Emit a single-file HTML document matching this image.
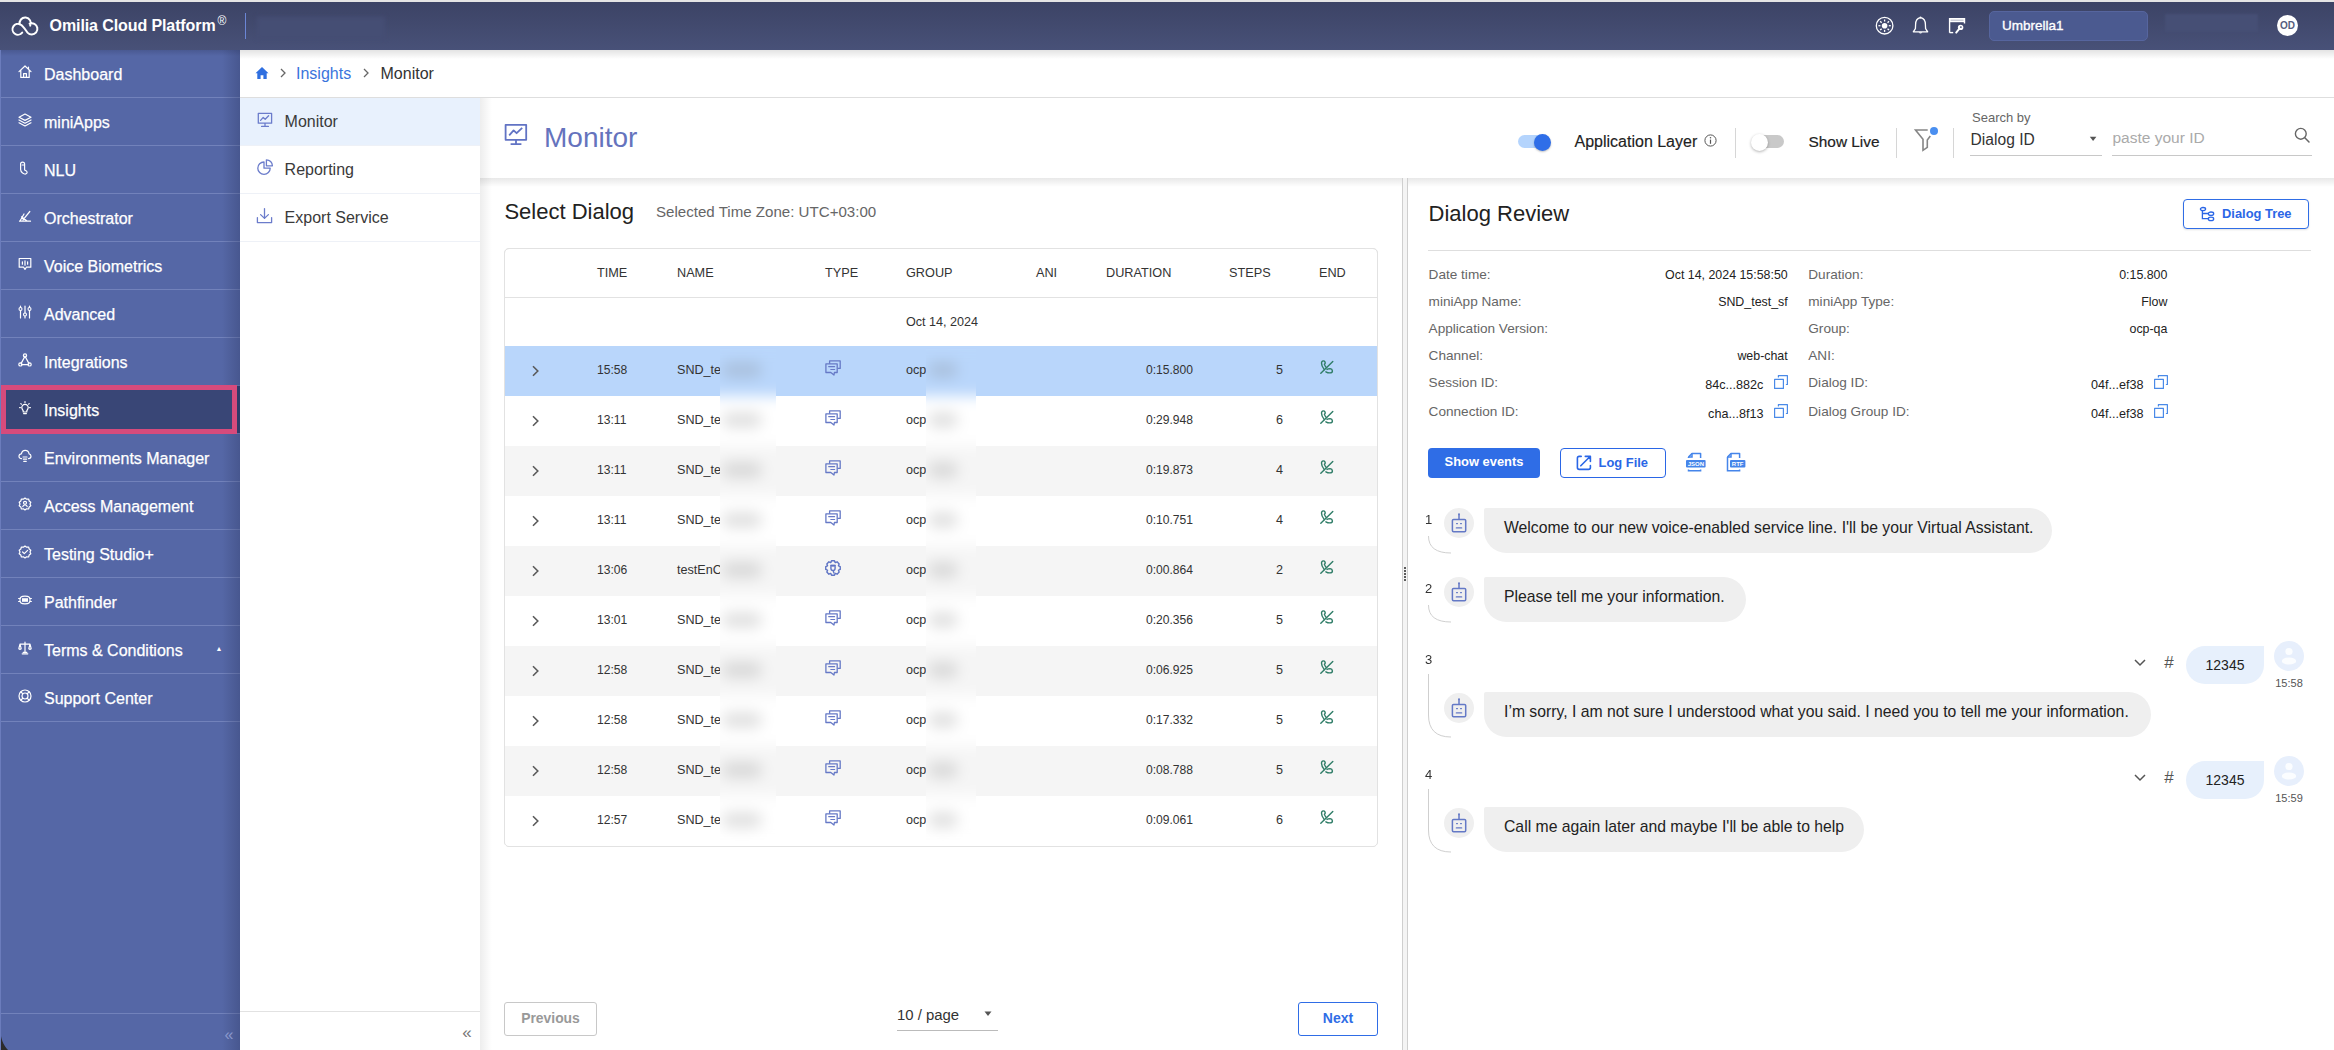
<!DOCTYPE html>
<html><head><meta charset="utf-8"><style>
*{margin:0;padding:0;box-sizing:border-box}
html,body{width:2334px;height:1050px;overflow:hidden;background:#fff;font-family:"Liberation Sans",sans-serif;color:#222}
.a{position:absolute}
.t{position:absolute;white-space:nowrap;line-height:20px;height:20px}
.sep{position:absolute;height:1px}
svg{position:absolute;overflow:visible}
</style></head><body>
<div class="a" style="left:0px;top:0px;width:2334px;height:2px;background:#e4e4e4"></div>
<div class="a" style="left:0px;top:2px;width:2334px;height:48px;background:linear-gradient(#3c4365,#485178)"></div>
<svg style="left:0px;top:0px;" width="50" height="50" viewBox="0 0 50 50"><path d="M22.2 32.6 A5.4 5.4 0 1 1 20.6 24.6 C23.6 26.2 25.8 30.5 27.5 32.6 C28.8 34 30.2 34.6 31.8 34.6 A5.7 5.7 0 1 0 29.6 23.6 M30.2 25.6 A5.6 5.6 0 1 0 19.8 24.6" fill="none" stroke="#fff" stroke-width="2" stroke-linecap="round" stroke-linejoin="round"/></svg>
<div class="t" style="left:49.6px;top:16.4px;font-size:16px;color:#fff;font-weight:bold;letter-spacing:-0.1px">Omilia Cloud Platform</div>
<div class="t" style="left:217.5px;top:11px;font-size:12px;color:#fff;font-weight:normal;">&reg;</div>
<div class="a" style="left:245px;top:13px;width:1px;height:26px;background:#6b86d6"></div>
<div class="a" style="left:257px;top:17px;width:128px;height:22px;background:#454e74;filter:blur(2px)"></div>
<svg style="left:1875px;top:16px;" width="20" height="20" viewBox="0 0 20 20"><circle cx="9.6" cy="9.7" r="8.3" fill="none" stroke="#fff" stroke-width="1.3"/><circle cx="9.6" cy="9.7" r="2.8" fill="#fff"/><line x1="9.60" y1="5.50" x2="9.60" y2="3.50" stroke="#fff" stroke-width="1.3"/><line x1="12.57" y1="6.73" x2="13.98" y2="5.32" stroke="#fff" stroke-width="1.3"/><line x1="13.80" y1="9.70" x2="15.80" y2="9.70" stroke="#fff" stroke-width="1.3"/><line x1="12.57" y1="12.67" x2="13.98" y2="14.08" stroke="#fff" stroke-width="1.3"/><line x1="9.60" y1="13.90" x2="9.60" y2="15.90" stroke="#fff" stroke-width="1.3"/><line x1="6.63" y1="12.67" x2="5.22" y2="14.08" stroke="#fff" stroke-width="1.3"/><line x1="5.40" y1="9.70" x2="3.40" y2="9.70" stroke="#fff" stroke-width="1.3"/><line x1="6.63" y1="6.73" x2="5.22" y2="5.32" stroke="#fff" stroke-width="1.3"/></svg>
<svg style="left:1912px;top:16px;" width="18" height="20" viewBox="0 0 18 20"><path d="M8.5 1.6 C5 2.2 3.6 5 3.6 8.5 L3.4 12.6 L1.3 15.8 L15.7 15.8 L13.6 12.6 L13.4 8.5 C13.4 5 12 2.2 8.5 1.6 Z" fill="none" stroke="#fff" stroke-width="1.3" stroke-linejoin="round"/><path d="M6.6 16.2 Q8.5 18.8 10.4 16.2 Z" fill="#fff"/><circle cx="8.5" cy="1.6" r="1" fill="#fff"/></svg>
<svg style="left:1948px;top:17px;" width="20" height="18" viewBox="0 0 20 18"><path d="M1.6 15.8 V1.6 H16.5 V6.4" fill="none" stroke="#fff" stroke-width="1.4"/><rect x="1.6" y="1.6" width="14.9" height="3.6" fill="#fff"/><rect x="2.6" y="2.6" width="12.9" height="1.2" fill="#4a5379" opacity=".35"/><line x1="1.6" y1="15.6" x2="5.2" y2="15.6" stroke="#fff" stroke-width="1.4"/><circle cx="12.6" cy="10.4" r="2.7" fill="#fff"/><circle cx="12.9" cy="10.1" r="0.9" fill="#454e74"/><line x1="11" y1="12.2" x2="8.2" y2="15.6" stroke="#fff" stroke-width="2" stroke-linecap="round"/></svg>
<div class="a" style="left:1989px;top:11px;width:159px;height:30px;background:#4b5a90;border:1px solid #56659e;border-radius:5px"></div>
<div class="t" style="left:2002px;top:16px;font-size:13.5px;color:#fff;font-weight:normal;-webkit-text-stroke:0.35px #fff">Umbrella1</div>
<div class="a" style="left:2165px;top:14px;width:93px;height:18px;background:#464f75;filter:blur(1px)"></div>
<div class="a" style="left:2277px;top:15px;width:21px;height:21px;background:#fff;border-radius:50%"></div>
<div class="t" style="left:2187.5px;width:200px;top:16px;font-size:10px;color:#555d80;font-weight:bold;text-align:center;">OD</div>
<div class="a" style="left:0px;top:50px;width:240px;height:1000px;background:#5567a6"></div>
<div class="a" style="left:0px;top:50px;width:240px;height:6px;background:linear-gradient(rgba(40,48,85,.25),rgba(40,48,85,0))"></div>
<div class="sep" style="left:0;top:97px;width:240px;background:#7282bb"></div>
<div class="sep" style="left:0;top:145px;width:240px;background:#7282bb"></div>
<div class="sep" style="left:0;top:193px;width:240px;background:#7282bb"></div>
<div class="sep" style="left:0;top:241px;width:240px;background:#7282bb"></div>
<div class="sep" style="left:0;top:289px;width:240px;background:#7282bb"></div>
<div class="sep" style="left:0;top:337px;width:240px;background:#7282bb"></div>
<div class="sep" style="left:0;top:385px;width:240px;background:#7282bb"></div>
<div class="sep" style="left:0;top:433px;width:240px;background:#7282bb"></div>
<div class="sep" style="left:0;top:481px;width:240px;background:#7282bb"></div>
<div class="sep" style="left:0;top:529px;width:240px;background:#7282bb"></div>
<div class="sep" style="left:0;top:577px;width:240px;background:#7282bb"></div>
<div class="sep" style="left:0;top:625px;width:240px;background:#7282bb"></div>
<div class="sep" style="left:0;top:673px;width:240px;background:#7282bb"></div>
<div class="sep" style="left:0;top:721px;width:240px;background:#7282bb"></div>
<div class="a" style="left:0px;top:1013px;width:240px;height:1px;background:#7282bb"></div>
<div class="a" style="left:222px;top:50px;width:18px;height:1000px;background:linear-gradient(90deg,rgba(40,50,90,0),rgba(40,50,90,.3))"></div>
<div class="a" style="left:0px;top:386px;width:240px;height:47px;background:#2f3b69"></div>
<div class="a" style="left:1px;top:385px;width:236px;height:49px;background:#394676;border:5px solid #d64b7c"></div>
<div class="t" style="left:44px;top:65px;font-size:16px;color:#fff;font-weight:normal;-webkit-text-stroke:0.25px #fff">Dashboard</div>
<div class="t" style="left:44px;top:113px;font-size:16px;color:#fff;font-weight:normal;-webkit-text-stroke:0.25px #fff">miniApps</div>
<div class="t" style="left:44px;top:161px;font-size:16px;color:#fff;font-weight:normal;-webkit-text-stroke:0.25px #fff">NLU</div>
<div class="t" style="left:44px;top:209px;font-size:16px;color:#fff;font-weight:normal;-webkit-text-stroke:0.25px #fff">Orchestrator</div>
<div class="t" style="left:44px;top:257px;font-size:16px;color:#fff;font-weight:normal;-webkit-text-stroke:0.25px #fff">Voice Biometrics</div>
<div class="t" style="left:44px;top:305px;font-size:16px;color:#fff;font-weight:normal;-webkit-text-stroke:0.25px #fff">Advanced</div>
<div class="t" style="left:44px;top:353px;font-size:16px;color:#fff;font-weight:normal;-webkit-text-stroke:0.25px #fff">Integrations</div>
<div class="t" style="left:44px;top:401px;font-size:16px;color:#fff;font-weight:normal;-webkit-text-stroke:0.25px #fff">Insights</div>
<div class="t" style="left:44px;top:449px;font-size:16px;color:#fff;font-weight:normal;-webkit-text-stroke:0.25px #fff">Environments Manager</div>
<div class="t" style="left:44px;top:497px;font-size:16px;color:#fff;font-weight:normal;-webkit-text-stroke:0.25px #fff">Access Management</div>
<div class="t" style="left:44px;top:545px;font-size:16px;color:#fff;font-weight:normal;-webkit-text-stroke:0.25px #fff">Testing Studio+</div>
<div class="t" style="left:44px;top:593px;font-size:16px;color:#fff;font-weight:normal;-webkit-text-stroke:0.25px #fff">Pathfinder</div>
<div class="t" style="left:44px;top:641px;font-size:16px;color:#fff;font-weight:normal;-webkit-text-stroke:0.25px #fff">Terms &amp; Conditions</div>
<div class="t" style="left:44px;top:689px;font-size:16px;color:#fff;font-weight:normal;-webkit-text-stroke:0.25px #fff">Support Center</div>
<div class="t" style="left:129px;width:200px;top:1025px;font-size:16px;color:#8a98cc;font-weight:normal;text-align:center;">&laquo;</div>
<div class="t" style="left:119px;width:200px;top:639px;font-size:7px;color:#fff;font-weight:normal;text-align:center;">&#9650;</div>
<div class="a" style="left:240px;top:50px;width:2094px;height:47px;background:#fff"></div>
<div class="a" style="left:240px;top:97px;width:2094px;height:1px;background:#dedede"></div>
<div class="a" style="left:240px;top:50px;width:2094px;height:9px;background:linear-gradient(rgba(0,0,0,.11),rgba(0,0,0,0))"></div>
<div class="t" style="left:296px;top:64.2px;font-size:16px;color:#3a74dc;font-weight:normal;">Insights</div>
<div class="t" style="left:380.5px;top:64px;font-size:16px;color:#333;font-weight:normal;">Monitor</div>
<svg style="left:255px;top:66px;" width="14" height="14" viewBox="0 0 14 14"><path d="M7 1 L0.5 7.2 L2.3 7.2 L2.3 13 L5.6 13 L5.6 9.2 L8.4 9.2 L8.4 13 L11.7 13 L11.7 7.2 L13.5 7.2 Z" fill="#2f6fe0"/></svg>
<svg style="left:279px;top:68px;" width="8" height="10" viewBox="0 0 8 10"><path d="M2 1 L6 5 L2 9" fill="none" stroke="#666" stroke-width="1.3"/></svg>
<svg style="left:362px;top:68px;" width="8" height="10" viewBox="0 0 8 10"><path d="M2 1 L6 5 L2 9" fill="none" stroke="#666" stroke-width="1.3"/></svg>
<div class="a" style="left:240px;top:98px;width:240px;height:47px;background:#e8f1fd"></div>
<div class="a" style="left:240px;top:145px;width:240px;height:1px;background:#eef1f7"></div>
<div class="a" style="left:240px;top:193px;width:240px;height:1px;background:#eef1f7"></div>
<div class="a" style="left:240px;top:241px;width:240px;height:1px;background:#eef1f7"></div>
<div class="a" style="left:240px;top:1011px;width:240px;height:1px;background:#e2e2e2"></div>
<div class="t" style="left:284.6px;top:112px;font-size:16px;color:#3a3a3a;font-weight:normal;">Monitor</div>
<div class="t" style="left:284.6px;top:160px;font-size:16px;color:#3a3a3a;font-weight:normal;">Reporting</div>
<div class="t" style="left:284.6px;top:208px;font-size:16px;color:#3a3a3a;font-weight:normal;">Export Service</div>
<div class="t" style="left:367px;width:200px;top:1023px;font-size:17px;color:#777;font-weight:normal;text-align:center;">&laquo;</div>
<div class="a" style="left:480px;top:98px;width:1854px;height:80px;background:#fff"></div>
<div class="a" style="left:480px;top:178px;width:1854px;height:9px;background:linear-gradient(rgba(0,0,0,.09),rgba(0,0,0,0))"></div>
<div class="t" style="left:544px;top:127.5px;font-size:28px;color:#6573bd;font-weight:normal;">Monitor</div>
<div class="a" style="left:1518px;top:135px;width:32px;height:13px;background:#b4d4fd;border-radius:7px"></div>
<div class="a" style="left:1534px;top:133.5px;width:17px;height:17px;background:#2f6ee8;border-radius:50%;box-shadow:0 1px 2px rgba(0,0,0,.25)"></div>
<div class="t" style="left:1574.5px;top:131.7px;font-size:16px;color:#222;font-weight:normal;-webkit-text-stroke:0.15px #222">Application Layer</div>
<svg style="left:1704px;top:134px;" width="13" height="13" viewBox="0 0 13 13"><circle cx="6.5" cy="6.5" r="5.6" fill="none" stroke="#555" stroke-width="1"/><path d="M6.5 5.6 V9.8" stroke="#555" stroke-width="1.2"/><circle cx="6.5" cy="3.7" r="0.75" fill="#555"/></svg>
<div class="a" style="left:1735px;top:128px;width:1px;height:30px;background:#d6d6d6"></div>
<div class="a" style="left:1753px;top:135px;width:31px;height:13px;background:#c9c9c9;border-radius:7px"></div>
<div class="a" style="left:1751px;top:133.5px;width:17px;height:17px;background:#fff;border-radius:50%;box-shadow:0 1px 3px rgba(0,0,0,.3)"></div>
<div class="t" style="left:1808.5px;top:131.7px;font-size:15.4px;color:#222;font-weight:normal;-webkit-text-stroke:0.2px #222">Show Live</div>
<div class="a" style="left:1896px;top:128px;width:1px;height:30px;background:#d6d6d6"></div>
<svg style="left:1913px;top:127px;" width="24" height="25" viewBox="0 0 24 25"><path d="M14.7 3 H2.5 L10 12.3 V23.3 L14.3 20.3 V13 L17.3 9" fill="none" stroke="#858585" stroke-width="1.6" stroke-linejoin="miter"/><circle cx="21" cy="4" r="4" fill="#4a8ff0"/></svg>
<div class="a" style="left:1953px;top:128px;width:1px;height:30px;background:#d6d6d6"></div>
<div class="t" style="left:1972px;top:107.5px;font-size:13px;color:#666;font-weight:normal;">Search by</div>
<div class="t" style="left:1970.6px;top:129.7px;font-size:15.6px;color:#333;font-weight:normal;">Dialog ID</div>
<svg style="left:2089px;top:136px;" width="9" height="7" viewBox="0 0 9 7"><path d="M0.8 0.8 L7.4 0.8 L4.1 5 Z" fill="#555"/></svg>
<div class="a" style="left:1970px;top:155px;width:132px;height:1px;background:#c8c8c8"></div>
<div class="t" style="left:2112.5px;top:128.1px;font-size:15.5px;color:#aaa;font-weight:normal;">paste your ID</div>
<div class="a" style="left:2112px;top:155px;width:200px;height:1px;background:#c8c8c8"></div>
<svg style="left:2294px;top:127px;" width="17" height="17" viewBox="0 0 17 17"><circle cx="6.8" cy="6.8" r="5.4" fill="none" stroke="#666" stroke-width="1.4"/><path d="M10.8 10.8 L15 15" stroke="#666" stroke-width="1.5" stroke-linecap="round"/></svg>
<div class="a" style="left:480px;top:98px;width:12px;height:952px;background:linear-gradient(90deg,rgba(0,0,0,.07),rgba(0,0,0,0))"></div>
<div class="t" style="left:504.4px;top:202.4px;font-size:22px;color:#222;font-weight:normal;">Select Dialog</div>
<div class="t" style="left:656px;top:202.1px;font-size:15.1px;color:#666;font-weight:normal;">Selected Time Zone: UTC+03:00</div>
<div class="a" style="left:504px;top:248px;width:874px;height:599px;background:#fff;border:1px solid #e2e2e2;border-radius:5px"></div>
<div class="a" style="left:505px;top:297px;width:872px;height:1px;background:#e2e2e2"></div>
<div class="t" style="left:597px;top:262.5px;font-size:12.7px;color:#333;font-weight:normal;">TIME</div>
<div class="t" style="left:677px;top:262.5px;font-size:12.7px;color:#333;font-weight:normal;">NAME</div>
<div class="t" style="left:825px;top:262.5px;font-size:12.7px;color:#333;font-weight:normal;">TYPE</div>
<div class="t" style="left:906px;top:262.5px;font-size:12.7px;color:#333;font-weight:normal;">GROUP</div>
<div class="t" style="left:1036px;top:262.5px;font-size:12.7px;color:#333;font-weight:normal;">ANI</div>
<div class="t" style="left:1106px;top:262.5px;font-size:12.7px;color:#333;font-weight:normal;">DURATION</div>
<div class="t" style="left:1229px;top:262.5px;font-size:12.7px;color:#333;font-weight:normal;">STEPS</div>
<div class="t" style="left:1319px;top:262.5px;font-size:12.7px;color:#333;font-weight:normal;">END</div>
<div class="t" style="left:906px;top:312px;font-size:12.6px;color:#333;font-weight:normal;">Oct 14, 2024</div>
<div class="a" style="left:505px;top:346px;width:872px;height:50px;background:#b9d6fb"></div>
<svg style="left:531px;top:365.4px;" width="10" height="12" viewBox="0 0 10 12"><path d="M2 1.2 L6.8 6 L2 10.8" fill="none" stroke="#5a5a5a" stroke-width="1.6"/></svg>
<div class="t" style="left:597px;top:360.4px;font-size:12.1px;color:#333;font-weight:normal;">15:58</div>
<div class="t" style="left:677px;top:360.4px;font-size:12.6px;color:#333;font-weight:normal;">SND_te</div>
<svg style="left:825px;top:360.4px;" width="16" height="16" viewBox="0 0 16 16"><path d="M4.6 3.8 V0.9 H15.2 V8.4 H12.6" fill="none" stroke="#6679c6" stroke-width="1.3" stroke-linejoin="round"/><path d="M0.9 3.9 H12.2 V12.5 H9.4 L9 15 L5.8 12.5 H0.9 Z" fill="none" stroke="#6679c6" stroke-width="1.3" stroke-linejoin="round"/><line x1="3.7" y1="6.6" x2="9.6" y2="6.6" stroke="#6679c6" stroke-width="1.2" stroke-linecap="round"/><line x1="5.8" y1="9.5" x2="9.6" y2="9.5" stroke="#6679c6" stroke-width="1.2" stroke-linecap="round"/></svg>
<div class="t" style="left:906px;top:360.4px;font-size:12.6px;color:#333;font-weight:normal;">ocp</div>
<div class="t" style="right:1141px;top:360.4px;font-size:12.1px;color:#333;font-weight:normal;text-align:right;">0:15.800</div>
<div class="t" style="right:1051px;top:360.4px;font-size:12.6px;color:#333;font-weight:normal;text-align:right;">5</div>
<svg style="left:1320px;top:360.4px;" width="14" height="14" viewBox="0 0 14 14"><line x1="0.8" y1="13.3" x2="12.8" y2="1.4" stroke="#2f7d67" stroke-width="1.4" stroke-linecap="round"/><path d="M4.3 9.6 C2.6 7.6 1.4 5.6 1.5 3 C1.6 1.3 3 0.4 4.3 1.2 C5.4 1.9 5.6 3.4 4.4 4.4 C4.8 5.7 5.4 6.6 6.3 7.4" fill="none" stroke="#2f7d67" stroke-width="1.4" stroke-linecap="round" stroke-linejoin="round"/><path d="M7 9.4 C8 8.7 9.4 8.6 10.1 8.6 C11.3 8.7 12.3 9.8 12.4 10.9 C12.4 12.2 11 12.9 9.8 12.9 C8.5 12.9 7.2 12.6 5.9 11.8" fill="none" stroke="#2f7d67" stroke-width="1.4" stroke-linecap="round" stroke-linejoin="round"/></svg>
<div class="a" style="left:505px;top:396px;width:872px;height:50px;background:#fff"></div>
<svg style="left:531px;top:415.4px;" width="10" height="12" viewBox="0 0 10 12"><path d="M2 1.2 L6.8 6 L2 10.8" fill="none" stroke="#5a5a5a" stroke-width="1.6"/></svg>
<div class="t" style="left:597px;top:410.4px;font-size:12.1px;color:#333;font-weight:normal;">13:11</div>
<div class="t" style="left:677px;top:410.4px;font-size:12.6px;color:#333;font-weight:normal;">SND_te</div>
<svg style="left:825px;top:410.4px;" width="16" height="16" viewBox="0 0 16 16"><path d="M4.6 3.8 V0.9 H15.2 V8.4 H12.6" fill="none" stroke="#6679c6" stroke-width="1.3" stroke-linejoin="round"/><path d="M0.9 3.9 H12.2 V12.5 H9.4 L9 15 L5.8 12.5 H0.9 Z" fill="none" stroke="#6679c6" stroke-width="1.3" stroke-linejoin="round"/><line x1="3.7" y1="6.6" x2="9.6" y2="6.6" stroke="#6679c6" stroke-width="1.2" stroke-linecap="round"/><line x1="5.8" y1="9.5" x2="9.6" y2="9.5" stroke="#6679c6" stroke-width="1.2" stroke-linecap="round"/></svg>
<div class="t" style="left:906px;top:410.4px;font-size:12.6px;color:#333;font-weight:normal;">ocp</div>
<div class="t" style="right:1141px;top:410.4px;font-size:12.1px;color:#333;font-weight:normal;text-align:right;">0:29.948</div>
<div class="t" style="right:1051px;top:410.4px;font-size:12.6px;color:#333;font-weight:normal;text-align:right;">6</div>
<svg style="left:1320px;top:410.4px;" width="14" height="14" viewBox="0 0 14 14"><line x1="0.8" y1="13.3" x2="12.8" y2="1.4" stroke="#2f7d67" stroke-width="1.4" stroke-linecap="round"/><path d="M4.3 9.6 C2.6 7.6 1.4 5.6 1.5 3 C1.6 1.3 3 0.4 4.3 1.2 C5.4 1.9 5.6 3.4 4.4 4.4 C4.8 5.7 5.4 6.6 6.3 7.4" fill="none" stroke="#2f7d67" stroke-width="1.4" stroke-linecap="round" stroke-linejoin="round"/><path d="M7 9.4 C8 8.7 9.4 8.6 10.1 8.6 C11.3 8.7 12.3 9.8 12.4 10.9 C12.4 12.2 11 12.9 9.8 12.9 C8.5 12.9 7.2 12.6 5.9 11.8" fill="none" stroke="#2f7d67" stroke-width="1.4" stroke-linecap="round" stroke-linejoin="round"/></svg>
<div class="a" style="left:505px;top:446px;width:872px;height:50px;background:#f5f5f5"></div>
<svg style="left:531px;top:465.4px;" width="10" height="12" viewBox="0 0 10 12"><path d="M2 1.2 L6.8 6 L2 10.8" fill="none" stroke="#5a5a5a" stroke-width="1.6"/></svg>
<div class="t" style="left:597px;top:460.4px;font-size:12.1px;color:#333;font-weight:normal;">13:11</div>
<div class="t" style="left:677px;top:460.4px;font-size:12.6px;color:#333;font-weight:normal;">SND_te</div>
<svg style="left:825px;top:460.4px;" width="16" height="16" viewBox="0 0 16 16"><path d="M4.6 3.8 V0.9 H15.2 V8.4 H12.6" fill="none" stroke="#6679c6" stroke-width="1.3" stroke-linejoin="round"/><path d="M0.9 3.9 H12.2 V12.5 H9.4 L9 15 L5.8 12.5 H0.9 Z" fill="none" stroke="#6679c6" stroke-width="1.3" stroke-linejoin="round"/><line x1="3.7" y1="6.6" x2="9.6" y2="6.6" stroke="#6679c6" stroke-width="1.2" stroke-linecap="round"/><line x1="5.8" y1="9.5" x2="9.6" y2="9.5" stroke="#6679c6" stroke-width="1.2" stroke-linecap="round"/></svg>
<div class="t" style="left:906px;top:460.4px;font-size:12.6px;color:#333;font-weight:normal;">ocp</div>
<div class="t" style="right:1141px;top:460.4px;font-size:12.1px;color:#333;font-weight:normal;text-align:right;">0:19.873</div>
<div class="t" style="right:1051px;top:460.4px;font-size:12.6px;color:#333;font-weight:normal;text-align:right;">4</div>
<svg style="left:1320px;top:460.4px;" width="14" height="14" viewBox="0 0 14 14"><line x1="0.8" y1="13.3" x2="12.8" y2="1.4" stroke="#2f7d67" stroke-width="1.4" stroke-linecap="round"/><path d="M4.3 9.6 C2.6 7.6 1.4 5.6 1.5 3 C1.6 1.3 3 0.4 4.3 1.2 C5.4 1.9 5.6 3.4 4.4 4.4 C4.8 5.7 5.4 6.6 6.3 7.4" fill="none" stroke="#2f7d67" stroke-width="1.4" stroke-linecap="round" stroke-linejoin="round"/><path d="M7 9.4 C8 8.7 9.4 8.6 10.1 8.6 C11.3 8.7 12.3 9.8 12.4 10.9 C12.4 12.2 11 12.9 9.8 12.9 C8.5 12.9 7.2 12.6 5.9 11.8" fill="none" stroke="#2f7d67" stroke-width="1.4" stroke-linecap="round" stroke-linejoin="round"/></svg>
<div class="a" style="left:505px;top:496px;width:872px;height:50px;background:#fff"></div>
<svg style="left:531px;top:515.4px;" width="10" height="12" viewBox="0 0 10 12"><path d="M2 1.2 L6.8 6 L2 10.8" fill="none" stroke="#5a5a5a" stroke-width="1.6"/></svg>
<div class="t" style="left:597px;top:510.4px;font-size:12.1px;color:#333;font-weight:normal;">13:11</div>
<div class="t" style="left:677px;top:510.4px;font-size:12.6px;color:#333;font-weight:normal;">SND_te</div>
<svg style="left:825px;top:510.4px;" width="16" height="16" viewBox="0 0 16 16"><path d="M4.6 3.8 V0.9 H15.2 V8.4 H12.6" fill="none" stroke="#6679c6" stroke-width="1.3" stroke-linejoin="round"/><path d="M0.9 3.9 H12.2 V12.5 H9.4 L9 15 L5.8 12.5 H0.9 Z" fill="none" stroke="#6679c6" stroke-width="1.3" stroke-linejoin="round"/><line x1="3.7" y1="6.6" x2="9.6" y2="6.6" stroke="#6679c6" stroke-width="1.2" stroke-linecap="round"/><line x1="5.8" y1="9.5" x2="9.6" y2="9.5" stroke="#6679c6" stroke-width="1.2" stroke-linecap="round"/></svg>
<div class="t" style="left:906px;top:510.4px;font-size:12.6px;color:#333;font-weight:normal;">ocp</div>
<div class="t" style="right:1141px;top:510.4px;font-size:12.1px;color:#333;font-weight:normal;text-align:right;">0:10.751</div>
<div class="t" style="right:1051px;top:510.4px;font-size:12.6px;color:#333;font-weight:normal;text-align:right;">4</div>
<svg style="left:1320px;top:510.4px;" width="14" height="14" viewBox="0 0 14 14"><line x1="0.8" y1="13.3" x2="12.8" y2="1.4" stroke="#2f7d67" stroke-width="1.4" stroke-linecap="round"/><path d="M4.3 9.6 C2.6 7.6 1.4 5.6 1.5 3 C1.6 1.3 3 0.4 4.3 1.2 C5.4 1.9 5.6 3.4 4.4 4.4 C4.8 5.7 5.4 6.6 6.3 7.4" fill="none" stroke="#2f7d67" stroke-width="1.4" stroke-linecap="round" stroke-linejoin="round"/><path d="M7 9.4 C8 8.7 9.4 8.6 10.1 8.6 C11.3 8.7 12.3 9.8 12.4 10.9 C12.4 12.2 11 12.9 9.8 12.9 C8.5 12.9 7.2 12.6 5.9 11.8" fill="none" stroke="#2f7d67" stroke-width="1.4" stroke-linecap="round" stroke-linejoin="round"/></svg>
<div class="a" style="left:505px;top:546px;width:872px;height:50px;background:#f5f5f5"></div>
<svg style="left:531px;top:565.4px;" width="10" height="12" viewBox="0 0 10 12"><path d="M2 1.2 L6.8 6 L2 10.8" fill="none" stroke="#5a5a5a" stroke-width="1.6"/></svg>
<div class="t" style="left:597px;top:560.4px;font-size:12.1px;color:#333;font-weight:normal;">13:06</div>
<div class="t" style="left:677px;top:560.4px;font-size:12.6px;color:#333;font-weight:normal;">testEnC</div>
<svg style="left:825px;top:560.4px;" width="16" height="16" viewBox="0 0 16 16"><path d="M5.89 2.38 L6.53 0.75 L9.47 0.75 L10.11 2.38 L10.48 2.53 L12.09 1.83 L14.17 3.91 L13.47 5.52 L13.62 5.89 L15.25 6.53 L15.25 9.47 L13.62 10.11 L13.47 10.48 L14.17 12.09 L12.09 14.17 L10.48 13.47 L10.11 13.62 L9.47 15.25 L6.53 15.25 L5.89 13.62 L5.52 13.47 L3.91 14.17 L1.83 12.09 L2.53 10.48 L2.38 10.11 L0.75 9.47 L0.75 6.53 L2.38 5.89 L2.53 5.52 L1.83 3.91 L3.91 1.83 L5.52 2.53 Z" fill="none" stroke="#5f74c4" stroke-width="1.4" stroke-linejoin="round"/><path d="M5.6 5 H10.4 V6.2 H5.6 Z" fill="#5f74c4" stroke="#5f74c4" stroke-width="0.8"/><path d="M5.9 6.2 V8.2 C5.9 9.6 6.8 10.4 8 10.4 C9.2 10.4 10.1 9.6 10.1 8.2 V6.2 M8 10.4 L9.2 13.6" fill="none" stroke="#5f74c4" stroke-width="1.4"/></svg>
<div class="t" style="left:906px;top:560.4px;font-size:12.6px;color:#333;font-weight:normal;">ocp</div>
<div class="t" style="right:1141px;top:560.4px;font-size:12.1px;color:#333;font-weight:normal;text-align:right;">0:00.864</div>
<div class="t" style="right:1051px;top:560.4px;font-size:12.6px;color:#333;font-weight:normal;text-align:right;">2</div>
<svg style="left:1320px;top:560.4px;" width="14" height="14" viewBox="0 0 14 14"><line x1="0.8" y1="13.3" x2="12.8" y2="1.4" stroke="#2f7d67" stroke-width="1.4" stroke-linecap="round"/><path d="M4.3 9.6 C2.6 7.6 1.4 5.6 1.5 3 C1.6 1.3 3 0.4 4.3 1.2 C5.4 1.9 5.6 3.4 4.4 4.4 C4.8 5.7 5.4 6.6 6.3 7.4" fill="none" stroke="#2f7d67" stroke-width="1.4" stroke-linecap="round" stroke-linejoin="round"/><path d="M7 9.4 C8 8.7 9.4 8.6 10.1 8.6 C11.3 8.7 12.3 9.8 12.4 10.9 C12.4 12.2 11 12.9 9.8 12.9 C8.5 12.9 7.2 12.6 5.9 11.8" fill="none" stroke="#2f7d67" stroke-width="1.4" stroke-linecap="round" stroke-linejoin="round"/></svg>
<div class="a" style="left:505px;top:596px;width:872px;height:50px;background:#fff"></div>
<svg style="left:531px;top:615.4px;" width="10" height="12" viewBox="0 0 10 12"><path d="M2 1.2 L6.8 6 L2 10.8" fill="none" stroke="#5a5a5a" stroke-width="1.6"/></svg>
<div class="t" style="left:597px;top:610.4px;font-size:12.1px;color:#333;font-weight:normal;">13:01</div>
<div class="t" style="left:677px;top:610.4px;font-size:12.6px;color:#333;font-weight:normal;">SND_te</div>
<svg style="left:825px;top:610.4px;" width="16" height="16" viewBox="0 0 16 16"><path d="M4.6 3.8 V0.9 H15.2 V8.4 H12.6" fill="none" stroke="#6679c6" stroke-width="1.3" stroke-linejoin="round"/><path d="M0.9 3.9 H12.2 V12.5 H9.4 L9 15 L5.8 12.5 H0.9 Z" fill="none" stroke="#6679c6" stroke-width="1.3" stroke-linejoin="round"/><line x1="3.7" y1="6.6" x2="9.6" y2="6.6" stroke="#6679c6" stroke-width="1.2" stroke-linecap="round"/><line x1="5.8" y1="9.5" x2="9.6" y2="9.5" stroke="#6679c6" stroke-width="1.2" stroke-linecap="round"/></svg>
<div class="t" style="left:906px;top:610.4px;font-size:12.6px;color:#333;font-weight:normal;">ocp</div>
<div class="t" style="right:1141px;top:610.4px;font-size:12.1px;color:#333;font-weight:normal;text-align:right;">0:20.356</div>
<div class="t" style="right:1051px;top:610.4px;font-size:12.6px;color:#333;font-weight:normal;text-align:right;">5</div>
<svg style="left:1320px;top:610.4px;" width="14" height="14" viewBox="0 0 14 14"><line x1="0.8" y1="13.3" x2="12.8" y2="1.4" stroke="#2f7d67" stroke-width="1.4" stroke-linecap="round"/><path d="M4.3 9.6 C2.6 7.6 1.4 5.6 1.5 3 C1.6 1.3 3 0.4 4.3 1.2 C5.4 1.9 5.6 3.4 4.4 4.4 C4.8 5.7 5.4 6.6 6.3 7.4" fill="none" stroke="#2f7d67" stroke-width="1.4" stroke-linecap="round" stroke-linejoin="round"/><path d="M7 9.4 C8 8.7 9.4 8.6 10.1 8.6 C11.3 8.7 12.3 9.8 12.4 10.9 C12.4 12.2 11 12.9 9.8 12.9 C8.5 12.9 7.2 12.6 5.9 11.8" fill="none" stroke="#2f7d67" stroke-width="1.4" stroke-linecap="round" stroke-linejoin="round"/></svg>
<div class="a" style="left:505px;top:646px;width:872px;height:50px;background:#f5f5f5"></div>
<svg style="left:531px;top:665.4px;" width="10" height="12" viewBox="0 0 10 12"><path d="M2 1.2 L6.8 6 L2 10.8" fill="none" stroke="#5a5a5a" stroke-width="1.6"/></svg>
<div class="t" style="left:597px;top:660.4px;font-size:12.1px;color:#333;font-weight:normal;">12:58</div>
<div class="t" style="left:677px;top:660.4px;font-size:12.6px;color:#333;font-weight:normal;">SND_te</div>
<svg style="left:825px;top:660.4px;" width="16" height="16" viewBox="0 0 16 16"><path d="M4.6 3.8 V0.9 H15.2 V8.4 H12.6" fill="none" stroke="#6679c6" stroke-width="1.3" stroke-linejoin="round"/><path d="M0.9 3.9 H12.2 V12.5 H9.4 L9 15 L5.8 12.5 H0.9 Z" fill="none" stroke="#6679c6" stroke-width="1.3" stroke-linejoin="round"/><line x1="3.7" y1="6.6" x2="9.6" y2="6.6" stroke="#6679c6" stroke-width="1.2" stroke-linecap="round"/><line x1="5.8" y1="9.5" x2="9.6" y2="9.5" stroke="#6679c6" stroke-width="1.2" stroke-linecap="round"/></svg>
<div class="t" style="left:906px;top:660.4px;font-size:12.6px;color:#333;font-weight:normal;">ocp</div>
<div class="t" style="right:1141px;top:660.4px;font-size:12.1px;color:#333;font-weight:normal;text-align:right;">0:06.925</div>
<div class="t" style="right:1051px;top:660.4px;font-size:12.6px;color:#333;font-weight:normal;text-align:right;">5</div>
<svg style="left:1320px;top:660.4px;" width="14" height="14" viewBox="0 0 14 14"><line x1="0.8" y1="13.3" x2="12.8" y2="1.4" stroke="#2f7d67" stroke-width="1.4" stroke-linecap="round"/><path d="M4.3 9.6 C2.6 7.6 1.4 5.6 1.5 3 C1.6 1.3 3 0.4 4.3 1.2 C5.4 1.9 5.6 3.4 4.4 4.4 C4.8 5.7 5.4 6.6 6.3 7.4" fill="none" stroke="#2f7d67" stroke-width="1.4" stroke-linecap="round" stroke-linejoin="round"/><path d="M7 9.4 C8 8.7 9.4 8.6 10.1 8.6 C11.3 8.7 12.3 9.8 12.4 10.9 C12.4 12.2 11 12.9 9.8 12.9 C8.5 12.9 7.2 12.6 5.9 11.8" fill="none" stroke="#2f7d67" stroke-width="1.4" stroke-linecap="round" stroke-linejoin="round"/></svg>
<div class="a" style="left:505px;top:696px;width:872px;height:50px;background:#fff"></div>
<svg style="left:531px;top:715.4px;" width="10" height="12" viewBox="0 0 10 12"><path d="M2 1.2 L6.8 6 L2 10.8" fill="none" stroke="#5a5a5a" stroke-width="1.6"/></svg>
<div class="t" style="left:597px;top:710.4px;font-size:12.1px;color:#333;font-weight:normal;">12:58</div>
<div class="t" style="left:677px;top:710.4px;font-size:12.6px;color:#333;font-weight:normal;">SND_te</div>
<svg style="left:825px;top:710.4px;" width="16" height="16" viewBox="0 0 16 16"><path d="M4.6 3.8 V0.9 H15.2 V8.4 H12.6" fill="none" stroke="#6679c6" stroke-width="1.3" stroke-linejoin="round"/><path d="M0.9 3.9 H12.2 V12.5 H9.4 L9 15 L5.8 12.5 H0.9 Z" fill="none" stroke="#6679c6" stroke-width="1.3" stroke-linejoin="round"/><line x1="3.7" y1="6.6" x2="9.6" y2="6.6" stroke="#6679c6" stroke-width="1.2" stroke-linecap="round"/><line x1="5.8" y1="9.5" x2="9.6" y2="9.5" stroke="#6679c6" stroke-width="1.2" stroke-linecap="round"/></svg>
<div class="t" style="left:906px;top:710.4px;font-size:12.6px;color:#333;font-weight:normal;">ocp</div>
<div class="t" style="right:1141px;top:710.4px;font-size:12.1px;color:#333;font-weight:normal;text-align:right;">0:17.332</div>
<div class="t" style="right:1051px;top:710.4px;font-size:12.6px;color:#333;font-weight:normal;text-align:right;">5</div>
<svg style="left:1320px;top:710.4px;" width="14" height="14" viewBox="0 0 14 14"><line x1="0.8" y1="13.3" x2="12.8" y2="1.4" stroke="#2f7d67" stroke-width="1.4" stroke-linecap="round"/><path d="M4.3 9.6 C2.6 7.6 1.4 5.6 1.5 3 C1.6 1.3 3 0.4 4.3 1.2 C5.4 1.9 5.6 3.4 4.4 4.4 C4.8 5.7 5.4 6.6 6.3 7.4" fill="none" stroke="#2f7d67" stroke-width="1.4" stroke-linecap="round" stroke-linejoin="round"/><path d="M7 9.4 C8 8.7 9.4 8.6 10.1 8.6 C11.3 8.7 12.3 9.8 12.4 10.9 C12.4 12.2 11 12.9 9.8 12.9 C8.5 12.9 7.2 12.6 5.9 11.8" fill="none" stroke="#2f7d67" stroke-width="1.4" stroke-linecap="round" stroke-linejoin="round"/></svg>
<div class="a" style="left:505px;top:746px;width:872px;height:50px;background:#f5f5f5"></div>
<svg style="left:531px;top:765.4px;" width="10" height="12" viewBox="0 0 10 12"><path d="M2 1.2 L6.8 6 L2 10.8" fill="none" stroke="#5a5a5a" stroke-width="1.6"/></svg>
<div class="t" style="left:597px;top:760.4px;font-size:12.1px;color:#333;font-weight:normal;">12:58</div>
<div class="t" style="left:677px;top:760.4px;font-size:12.6px;color:#333;font-weight:normal;">SND_te</div>
<svg style="left:825px;top:760.4px;" width="16" height="16" viewBox="0 0 16 16"><path d="M4.6 3.8 V0.9 H15.2 V8.4 H12.6" fill="none" stroke="#6679c6" stroke-width="1.3" stroke-linejoin="round"/><path d="M0.9 3.9 H12.2 V12.5 H9.4 L9 15 L5.8 12.5 H0.9 Z" fill="none" stroke="#6679c6" stroke-width="1.3" stroke-linejoin="round"/><line x1="3.7" y1="6.6" x2="9.6" y2="6.6" stroke="#6679c6" stroke-width="1.2" stroke-linecap="round"/><line x1="5.8" y1="9.5" x2="9.6" y2="9.5" stroke="#6679c6" stroke-width="1.2" stroke-linecap="round"/></svg>
<div class="t" style="left:906px;top:760.4px;font-size:12.6px;color:#333;font-weight:normal;">ocp</div>
<div class="t" style="right:1141px;top:760.4px;font-size:12.1px;color:#333;font-weight:normal;text-align:right;">0:08.788</div>
<div class="t" style="right:1051px;top:760.4px;font-size:12.6px;color:#333;font-weight:normal;text-align:right;">5</div>
<svg style="left:1320px;top:760.4px;" width="14" height="14" viewBox="0 0 14 14"><line x1="0.8" y1="13.3" x2="12.8" y2="1.4" stroke="#2f7d67" stroke-width="1.4" stroke-linecap="round"/><path d="M4.3 9.6 C2.6 7.6 1.4 5.6 1.5 3 C1.6 1.3 3 0.4 4.3 1.2 C5.4 1.9 5.6 3.4 4.4 4.4 C4.8 5.7 5.4 6.6 6.3 7.4" fill="none" stroke="#2f7d67" stroke-width="1.4" stroke-linecap="round" stroke-linejoin="round"/><path d="M7 9.4 C8 8.7 9.4 8.6 10.1 8.6 C11.3 8.7 12.3 9.8 12.4 10.9 C12.4 12.2 11 12.9 9.8 12.9 C8.5 12.9 7.2 12.6 5.9 11.8" fill="none" stroke="#2f7d67" stroke-width="1.4" stroke-linecap="round" stroke-linejoin="round"/></svg>
<div class="a" style="left:505px;top:796px;width:872px;height:50px;background:#fff"></div>
<svg style="left:531px;top:815.4px;" width="10" height="12" viewBox="0 0 10 12"><path d="M2 1.2 L6.8 6 L2 10.8" fill="none" stroke="#5a5a5a" stroke-width="1.6"/></svg>
<div class="t" style="left:597px;top:810.4px;font-size:12.1px;color:#333;font-weight:normal;">12:57</div>
<div class="t" style="left:677px;top:810.4px;font-size:12.6px;color:#333;font-weight:normal;">SND_te</div>
<svg style="left:825px;top:810.4px;" width="16" height="16" viewBox="0 0 16 16"><path d="M4.6 3.8 V0.9 H15.2 V8.4 H12.6" fill="none" stroke="#6679c6" stroke-width="1.3" stroke-linejoin="round"/><path d="M0.9 3.9 H12.2 V12.5 H9.4 L9 15 L5.8 12.5 H0.9 Z" fill="none" stroke="#6679c6" stroke-width="1.3" stroke-linejoin="round"/><line x1="3.7" y1="6.6" x2="9.6" y2="6.6" stroke="#6679c6" stroke-width="1.2" stroke-linecap="round"/><line x1="5.8" y1="9.5" x2="9.6" y2="9.5" stroke="#6679c6" stroke-width="1.2" stroke-linecap="round"/></svg>
<div class="t" style="left:906px;top:810.4px;font-size:12.6px;color:#333;font-weight:normal;">ocp</div>
<div class="t" style="right:1141px;top:810.4px;font-size:12.1px;color:#333;font-weight:normal;text-align:right;">0:09.061</div>
<div class="t" style="right:1051px;top:810.4px;font-size:12.6px;color:#333;font-weight:normal;text-align:right;">6</div>
<svg style="left:1320px;top:810.4px;" width="14" height="14" viewBox="0 0 14 14"><line x1="0.8" y1="13.3" x2="12.8" y2="1.4" stroke="#2f7d67" stroke-width="1.4" stroke-linecap="round"/><path d="M4.3 9.6 C2.6 7.6 1.4 5.6 1.5 3 C1.6 1.3 3 0.4 4.3 1.2 C5.4 1.9 5.6 3.4 4.4 4.4 C4.8 5.7 5.4 6.6 6.3 7.4" fill="none" stroke="#2f7d67" stroke-width="1.4" stroke-linecap="round" stroke-linejoin="round"/><path d="M7 9.4 C8 8.7 9.4 8.6 10.1 8.6 C11.3 8.7 12.3 9.8 12.4 10.9 C12.4 12.2 11 12.9 9.8 12.9 C8.5 12.9 7.2 12.6 5.9 11.8" fill="none" stroke="#2f7d67" stroke-width="1.4" stroke-linecap="round" stroke-linejoin="round"/></svg>
<div class="a" style="left:720px;top:346px;width:56px;height:500px;overflow:hidden"><div class="a" style="left:0;top:-20px;width:56px;height:540px;filter:blur(7px)"><div class="a" style="left:0;top:20px;width:100%;height:500px"><div class="a" style="left:-20px;top:0px;width:96px;height:50px;background:#b9d6fb"></div><div class="a" style="left:2px;top:16px;width:40px;height:16px;background:#777;border-radius:8px;opacity:.22"></div><div class="a" style="left:-20px;top:50px;width:96px;height:50px;background:#fff"></div><div class="a" style="left:2px;top:66px;width:40px;height:16px;background:#777;border-radius:8px;opacity:.22"></div><div class="a" style="left:-20px;top:100px;width:96px;height:50px;background:#f5f5f5"></div><div class="a" style="left:2px;top:116px;width:40px;height:16px;background:#777;border-radius:8px;opacity:.22"></div><div class="a" style="left:-20px;top:150px;width:96px;height:50px;background:#fff"></div><div class="a" style="left:2px;top:166px;width:40px;height:16px;background:#777;border-radius:8px;opacity:.22"></div><div class="a" style="left:-20px;top:200px;width:96px;height:50px;background:#f5f5f5"></div><div class="a" style="left:2px;top:216px;width:40px;height:16px;background:#777;border-radius:8px;opacity:.22"></div><div class="a" style="left:-20px;top:250px;width:96px;height:50px;background:#fff"></div><div class="a" style="left:2px;top:266px;width:40px;height:16px;background:#777;border-radius:8px;opacity:.22"></div><div class="a" style="left:-20px;top:300px;width:96px;height:50px;background:#f5f5f5"></div><div class="a" style="left:2px;top:316px;width:40px;height:16px;background:#777;border-radius:8px;opacity:.22"></div><div class="a" style="left:-20px;top:350px;width:96px;height:50px;background:#fff"></div><div class="a" style="left:2px;top:366px;width:40px;height:16px;background:#777;border-radius:8px;opacity:.22"></div><div class="a" style="left:-20px;top:400px;width:96px;height:50px;background:#f5f5f5"></div><div class="a" style="left:2px;top:416px;width:40px;height:16px;background:#777;border-radius:8px;opacity:.22"></div><div class="a" style="left:-20px;top:450px;width:96px;height:50px;background:#fff"></div><div class="a" style="left:2px;top:466px;width:40px;height:16px;background:#777;border-radius:8px;opacity:.22"></div></div></div></div>
<div class="a" style="left:926px;top:346px;width:50px;height:500px;overflow:hidden"><div class="a" style="left:0;top:-20px;width:50px;height:540px;filter:blur(7px)"><div class="a" style="left:0;top:20px;width:100%;height:500px"><div class="a" style="left:-20px;top:0px;width:90px;height:50px;background:#b9d6fb"></div><div class="a" style="left:2px;top:16px;width:30px;height:16px;background:#777;border-radius:8px;opacity:.22"></div><div class="a" style="left:-20px;top:50px;width:90px;height:50px;background:#fff"></div><div class="a" style="left:2px;top:66px;width:30px;height:16px;background:#777;border-radius:8px;opacity:.22"></div><div class="a" style="left:-20px;top:100px;width:90px;height:50px;background:#f5f5f5"></div><div class="a" style="left:2px;top:116px;width:30px;height:16px;background:#777;border-radius:8px;opacity:.22"></div><div class="a" style="left:-20px;top:150px;width:90px;height:50px;background:#fff"></div><div class="a" style="left:2px;top:166px;width:30px;height:16px;background:#777;border-radius:8px;opacity:.22"></div><div class="a" style="left:-20px;top:200px;width:90px;height:50px;background:#f5f5f5"></div><div class="a" style="left:2px;top:216px;width:30px;height:16px;background:#777;border-radius:8px;opacity:.22"></div><div class="a" style="left:-20px;top:250px;width:90px;height:50px;background:#fff"></div><div class="a" style="left:2px;top:266px;width:30px;height:16px;background:#777;border-radius:8px;opacity:.22"></div><div class="a" style="left:-20px;top:300px;width:90px;height:50px;background:#f5f5f5"></div><div class="a" style="left:2px;top:316px;width:30px;height:16px;background:#777;border-radius:8px;opacity:.22"></div><div class="a" style="left:-20px;top:350px;width:90px;height:50px;background:#fff"></div><div class="a" style="left:2px;top:366px;width:30px;height:16px;background:#777;border-radius:8px;opacity:.22"></div><div class="a" style="left:-20px;top:400px;width:90px;height:50px;background:#f5f5f5"></div><div class="a" style="left:2px;top:416px;width:30px;height:16px;background:#777;border-radius:8px;opacity:.22"></div><div class="a" style="left:-20px;top:450px;width:90px;height:50px;background:#fff"></div><div class="a" style="left:2px;top:466px;width:30px;height:16px;background:#777;border-radius:8px;opacity:.22"></div></div></div></div>
<div class="a" style="left:504px;top:248px;width:874px;height:599px;border:1px solid #e2e2e2;border-radius:5px"></div>
<div class="a" style="left:504px;top:1002px;width:93px;height:34px;background:#fff;border:1px solid #c8c8c8;border-radius:3px"></div>
<div class="t" style="left:450.5px;width:200px;top:1008.4px;font-size:13.9px;color:#999;font-weight:bold;text-align:center;">Previous</div>
<div class="a" style="left:1298px;top:1002px;width:80px;height:34px;background:#fff;border:1px solid #2f6de6;border-radius:3px"></div>
<div class="t" style="left:1238px;width:200px;top:1008.4px;font-size:14px;color:#2f6de6;font-weight:bold;text-align:center;">Next</div>
<div class="t" style="left:897px;top:1005px;font-size:14.9px;color:#333;font-weight:normal;">10 / page</div>
<div class="a" style="left:897px;top:1030px;width:101px;height:1px;background:#bbb"></div>
<svg style="left:984px;top:1011px;" width="8" height="6" viewBox="0 0 8 6"><path d="M0.5 0.5 L7.5 0.5 L4 5 Z" fill="#555"/></svg>
<div class="a" style="left:1402px;top:178px;width:6px;height:872px;background:#f4f4f4;border-left:1px solid #cfcfcf;border-right:1px solid #cfcfcf"></div>
<div class="a" style="left:1403.8px;top:566.5px;width:2px;height:2px;background:#2a2a2a;border-radius:1px"></div>
<div class="a" style="left:1403.8px;top:569.5px;width:2px;height:2px;background:#2a2a2a;border-radius:1px"></div>
<div class="a" style="left:1403.8px;top:572.5px;width:2px;height:2px;background:#2a2a2a;border-radius:1px"></div>
<div class="a" style="left:1403.8px;top:575.5px;width:2px;height:2px;background:#2a2a2a;border-radius:1px"></div>
<div class="a" style="left:1403.8px;top:578.5px;width:2px;height:2px;background:#2a2a2a;border-radius:1px"></div>
<div class="t" style="left:1428.6px;top:204.3px;font-size:22px;color:#222;font-weight:normal;">Dialog Review</div>
<div class="a" style="left:2183px;top:199px;width:126px;height:30px;background:#fff;border:1px solid #2f6de6;border-radius:4px;box-shadow:0 1px 2px rgba(0,0,0,.12)"></div>
<svg style="left:2199px;top:206px;" width="17" height="17" viewBox="0 0 17 17"><ellipse cx="4" cy="3.1" rx="2.6" ry="1.6" fill="none" stroke="#2a66e6" stroke-width="1.3"/><path d="M3.4 4.7 V12.7 H9.4 M3.4 7.5 H9.4" fill="none" stroke="#2a66e6" stroke-width="1.3"/><ellipse cx="12" cy="7.7" rx="2.7" ry="1.7" fill="none" stroke="#2a66e6" stroke-width="1.3"/><ellipse cx="12" cy="12.9" rx="2.7" ry="1.7" fill="none" stroke="#2a66e6" stroke-width="1.3"/></svg>
<div class="t" style="left:2222px;top:203.6px;font-size:12.9px;color:#2a66e6;font-weight:bold;">Dialog Tree</div>
<div class="a" style="left:1428px;top:250px;width:883px;height:1px;background:#dedede"></div>
<div class="t" style="left:1428.6px;top:264.7px;font-size:13.6px;color:#666;font-weight:normal;">Date time:</div>
<div class="t" style="right:546.3px;top:264.7px;font-size:12.4px;color:#222;font-weight:normal;text-align:right;">Oct 14, 2024 15:58:50</div>
<div class="t" style="left:1428.6px;top:291.7px;font-size:13.6px;color:#666;font-weight:normal;">miniApp Name:</div>
<div class="t" style="right:546.3px;top:291.7px;font-size:12.4px;color:#222;font-weight:normal;text-align:right;">SND_test_sf</div>
<div class="t" style="left:1428.6px;top:318.6px;font-size:13.6px;color:#666;font-weight:normal;">Application Version:</div>
<div class="t" style="left:1428.6px;top:345.7px;font-size:13.6px;color:#666;font-weight:normal;">Channel:</div>
<div class="t" style="right:546.3px;top:345.7px;font-size:12.4px;color:#222;font-weight:normal;text-align:right;">web-chat</div>
<div class="t" style="left:1428.6px;top:372.7px;font-size:13.6px;color:#666;font-weight:normal;">Session ID:</div>
<div class="t" style="right:570.5999999999999px;top:374.7px;font-size:12.6px;color:#222;font-weight:normal;text-align:right;">84c...882c</div>
<svg style="left:1774px;top:375.4px;" width="14" height="14" viewBox="0 0 14 14"><path d="M0.6 4.4 H9.4 V13.4 H0.6 Z" fill="none" stroke="#4a8ae8" stroke-width="1.2" stroke-linejoin="round"/><path d="M4.4 2 V0.6 H13.4 V9.5 H12.4" fill="none" stroke="#4a8ae8" stroke-width="1.2" stroke-linecap="round" stroke-linejoin="round"/></svg>
<div class="t" style="left:1428.6px;top:401.6px;font-size:13.6px;color:#666;font-weight:normal;">Connection ID:</div>
<div class="t" style="right:570.5999999999999px;top:403.6px;font-size:12.6px;color:#222;font-weight:normal;text-align:right;">cha...8f13</div>
<svg style="left:1774px;top:404.4px;" width="14" height="14" viewBox="0 0 14 14"><path d="M0.6 4.4 H9.4 V13.4 H0.6 Z" fill="none" stroke="#4a8ae8" stroke-width="1.2" stroke-linejoin="round"/><path d="M4.4 2 V0.6 H13.4 V9.5 H12.4" fill="none" stroke="#4a8ae8" stroke-width="1.2" stroke-linecap="round" stroke-linejoin="round"/></svg>
<div class="t" style="left:1808.3px;top:264.7px;font-size:13.6px;color:#666;font-weight:normal;">Duration:</div>
<div class="t" style="right:166.5999999999999px;top:264.7px;font-size:12.4px;color:#222;font-weight:normal;text-align:right;">0:15.800</div>
<div class="t" style="left:1808.3px;top:291.7px;font-size:13.6px;color:#666;font-weight:normal;">miniApp Type:</div>
<div class="t" style="right:166.5999999999999px;top:291.7px;font-size:12.4px;color:#222;font-weight:normal;text-align:right;">Flow</div>
<div class="t" style="left:1808.3px;top:318.6px;font-size:13.6px;color:#666;font-weight:normal;">Group:</div>
<div class="t" style="right:166.5999999999999px;top:318.6px;font-size:12.4px;color:#222;font-weight:normal;text-align:right;">ocp-qa</div>
<div class="t" style="left:1808.3px;top:345.7px;font-size:13.6px;color:#666;font-weight:normal;">ANI:</div>
<div class="t" style="left:1808.3px;top:372.7px;font-size:13.6px;color:#666;font-weight:normal;">Dialog ID:</div>
<div class="t" style="right:190.5px;top:374.7px;font-size:12.6px;color:#222;font-weight:normal;text-align:right;">04f...ef38</div>
<svg style="left:2154px;top:375.4px;" width="14" height="14" viewBox="0 0 14 14"><path d="M0.6 4.4 H9.4 V13.4 H0.6 Z" fill="none" stroke="#4a8ae8" stroke-width="1.2" stroke-linejoin="round"/><path d="M4.4 2 V0.6 H13.4 V9.5 H12.4" fill="none" stroke="#4a8ae8" stroke-width="1.2" stroke-linecap="round" stroke-linejoin="round"/></svg>
<div class="t" style="left:1808.3px;top:401.6px;font-size:13.6px;color:#666;font-weight:normal;">Dialog Group ID:</div>
<div class="t" style="right:190.5px;top:403.6px;font-size:12.6px;color:#222;font-weight:normal;text-align:right;">04f...ef38</div>
<svg style="left:2154px;top:404.4px;" width="14" height="14" viewBox="0 0 14 14"><path d="M0.6 4.4 H9.4 V13.4 H0.6 Z" fill="none" stroke="#4a8ae8" stroke-width="1.2" stroke-linejoin="round"/><path d="M4.4 2 V0.6 H13.4 V9.5 H12.4" fill="none" stroke="#4a8ae8" stroke-width="1.2" stroke-linecap="round" stroke-linejoin="round"/></svg>
<div class="a" style="left:1428px;top:448px;width:112px;height:30px;background:#2f6de6;border-radius:4px"></div>
<div class="t" style="left:1384px;width:200px;top:452.4px;font-size:12.9px;color:#fff;font-weight:bold;text-align:center;">Show events</div>
<div class="a" style="left:1560px;top:448px;width:106px;height:30px;background:#fff;border:1px solid #2a66e6;border-radius:4px"></div>
<svg style="left:1576px;top:455px;" width="16" height="16" viewBox="0 0 16 16"><path d="M5.2 1.4 H3.2 C2 1.4 1.4 2 1.4 3.2 V12.6 C1.4 13.8 2 14.4 3.2 14.4 H12.6 C13.8 14.4 14.4 13.8 14.4 12.6 V10.6" fill="none" stroke="#2a66e6" stroke-width="1.6" stroke-linecap="round"/><path d="M4.8 10.8 L13.8 1.8 M9.3 1.4 H14.4 V6.4" fill="none" stroke="#2a66e6" stroke-width="1.6" stroke-linecap="round" stroke-linejoin="round"/></svg>
<div class="t" style="left:1598.6px;top:452.7px;font-size:12.9px;color:#2a66e6;font-weight:bold;">Log File</div>
<svg style="left:1686px;top:452.3px;" width="22" height="21" viewBox="0 0 22 21"><path d="M2.5 5 L6 1.4 H14.6 V6" fill="none" stroke="#4585ea" stroke-width="1.5" stroke-linejoin="round"/><path d="M6 1.4 V5 H2.5" fill="none" stroke="#4585ea" stroke-width="1.5"/><path d="M2.5 5 V6" stroke="#4585ea" stroke-width="1.5"/><path d="M2.5 17.5 V18.8 H14.6 V17.5" fill="none" stroke="#4585ea" stroke-width="1.5"/><rect x="0" y="8" width="19.6" height="7.4" rx="1" fill="#4585ea"/><text x="9.8" y="14" font-family="Liberation Sans" font-weight="bold" font-size="6" fill="#fff" text-anchor="middle">JSON</text></svg>
<svg style="left:1725px;top:452.3px;" width="22" height="21" viewBox="0 0 22 21"><path d="M2.5 5 L6 1.4 H14.6 V6" fill="none" stroke="#4585ea" stroke-width="1.5" stroke-linejoin="round"/><path d="M6 1.4 V5 H2.5" fill="none" stroke="#4585ea" stroke-width="1.5"/><path d="M2.5 5 V18.8 H14.6 V17.5" fill="none" stroke="#4585ea" stroke-width="1.5"/><rect x="5" y="8" width="15.4" height="7.4" rx="1" fill="#4585ea"/><text x="12.7" y="14" font-family="Liberation Sans" font-weight="bold" font-size="6" fill="#fff" text-anchor="middle">RTF</text></svg>
<div class="a" style="left:1444px;top:508px;width:30px;height:30px;background:#efefef;border-radius:50%"></div>
<svg style="left:1459px;top:523px" width="1" height="1" viewBox="0 0 1 1"><rect x="-6.6" y="-3.6" width="13.3" height="12.3" rx="1.2" fill="none" stroke="#6479c6" stroke-width="1.5"/><path d="M0 -3.6 V-8.5" stroke="#6479c6" stroke-width="1.5"/><circle cx="0" cy="-8.8" r="1" fill="#6479c6"/><path d="M-2.5 0.6 H-1.5 M1.5 0.6 H2.5" stroke="#6479c6" stroke-width="1.1" stroke-linecap="round"/><path d="M-2.6 4.9 H2.6" stroke="#6479c6" stroke-width="1.4" stroke-linecap="round"/></svg>
<div class="a" style="left:1484px;top:508px;width:567.5px;height:45px;background:#efefef;border-radius:2px 22.5px 22.5px 22.5px"></div>
<div class="t" style="left:1504px;top:518px;font-size:15.75px;color:#222;font-weight:normal;">Welcome to our new voice-enabled service line. I&#39;ll be your Virtual Assistant.</div>
<div class="a" style="left:1444px;top:577px;width:30px;height:30px;background:#efefef;border-radius:50%"></div>
<svg style="left:1459px;top:592px" width="1" height="1" viewBox="0 0 1 1"><rect x="-6.6" y="-3.6" width="13.3" height="12.3" rx="1.2" fill="none" stroke="#6479c6" stroke-width="1.5"/><path d="M0 -3.6 V-8.5" stroke="#6479c6" stroke-width="1.5"/><circle cx="0" cy="-8.8" r="1" fill="#6479c6"/><path d="M-2.5 0.6 H-1.5 M1.5 0.6 H2.5" stroke="#6479c6" stroke-width="1.1" stroke-linecap="round"/><path d="M-2.6 4.9 H2.6" stroke="#6479c6" stroke-width="1.4" stroke-linecap="round"/></svg>
<div class="a" style="left:1484px;top:577px;width:261.70000000000005px;height:45px;background:#efefef;border-radius:2px 22.5px 22.5px 22.5px"></div>
<div class="t" style="left:1504px;top:587px;font-size:15.75px;color:#222;font-weight:normal;">Please tell me your information.</div>
<div class="a" style="left:1444px;top:693px;width:30px;height:30px;background:#efefef;border-radius:50%"></div>
<svg style="left:1459px;top:708px" width="1" height="1" viewBox="0 0 1 1"><rect x="-6.6" y="-3.6" width="13.3" height="12.3" rx="1.2" fill="none" stroke="#6479c6" stroke-width="1.5"/><path d="M0 -3.6 V-8.5" stroke="#6479c6" stroke-width="1.5"/><circle cx="0" cy="-8.8" r="1" fill="#6479c6"/><path d="M-2.5 0.6 H-1.5 M1.5 0.6 H2.5" stroke="#6479c6" stroke-width="1.1" stroke-linecap="round"/><path d="M-2.6 4.9 H2.6" stroke="#6479c6" stroke-width="1.4" stroke-linecap="round"/></svg>
<div class="a" style="left:1484px;top:692px;width:666.8000000000002px;height:45px;background:#efefef;border-radius:2px 22.5px 22.5px 22.5px"></div>
<div class="t" style="left:1504px;top:702px;font-size:15.75px;color:#222;font-weight:normal;">I&#8217;m sorry, I am not sure I understood what you said. I need you to tell me your information.</div>
<div class="a" style="left:1444px;top:808px;width:30px;height:30px;background:#efefef;border-radius:50%"></div>
<svg style="left:1459px;top:823px" width="1" height="1" viewBox="0 0 1 1"><rect x="-6.6" y="-3.6" width="13.3" height="12.3" rx="1.2" fill="none" stroke="#6479c6" stroke-width="1.5"/><path d="M0 -3.6 V-8.5" stroke="#6479c6" stroke-width="1.5"/><circle cx="0" cy="-8.8" r="1" fill="#6479c6"/><path d="M-2.5 0.6 H-1.5 M1.5 0.6 H2.5" stroke="#6479c6" stroke-width="1.1" stroke-linecap="round"/><path d="M-2.6 4.9 H2.6" stroke="#6479c6" stroke-width="1.4" stroke-linecap="round"/></svg>
<div class="a" style="left:1484px;top:807px;width:379.5999999999999px;height:45px;background:#efefef;border-radius:2px 22.5px 22.5px 22.5px"></div>
<div class="t" style="left:1504px;top:817px;font-size:15.75px;color:#222;font-weight:normal;">Call me again later and maybe I&#39;ll be able to help</div>
<div class="t" style="left:1328.5px;width:200px;top:509.6px;font-size:13px;color:#333;font-weight:normal;text-align:center;">1</div>
<div class="t" style="left:1328.5px;width:200px;top:578.6px;font-size:13px;color:#333;font-weight:normal;text-align:center;">2</div>
<div class="t" style="left:1328.5px;width:200px;top:649.8px;font-size:13px;color:#333;font-weight:normal;text-align:center;">3</div>
<div class="t" style="left:1328.5px;width:200px;top:764.7px;font-size:13px;color:#333;font-weight:normal;text-align:center;">4</div>
<svg style="left:1427px;top:536px;" width="26" height="18" viewBox="0 0 26 18"><path d="M1.5 0 Q1.5 17 24 17" fill="none" stroke="#cfcfcf" stroke-width="1"/></svg>
<svg style="left:1427px;top:605px;" width="26" height="18" viewBox="0 0 26 18"><path d="M1.5 0 Q1.5 17 24 17" fill="none" stroke="#cfcfcf" stroke-width="1"/></svg>
<svg style="left:1427px;top:674px;" width="26" height="64" viewBox="0 0 26 64"><path d="M1.5 0 V41 Q1.5 63 24 63" fill="none" stroke="#cfcfcf" stroke-width="1"/></svg>
<svg style="left:1427px;top:789px;" width="26" height="64" viewBox="0 0 26 64"><path d="M1.5 0 V41 Q1.5 63 24 63" fill="none" stroke="#cfcfcf" stroke-width="1"/></svg>
<svg style="left:2134px;top:659px;" width="12" height="8" viewBox="0 0 12 8"><path d="M1 1 L6 6 L11 1" fill="none" stroke="#555" stroke-width="1.5"/></svg>
<div class="t" style="left:2069px;width:200px;top:653px;font-size:17px;color:#555;font-weight:normal;text-align:center;">#</div>
<div class="a" style="left:2186px;top:646px;width:78px;height:38px;background:#e7f0fc;border-radius:19px 0 19px 19px"></div>
<div class="t" style="left:2125px;width:200px;top:655px;font-size:14px;color:#222;font-weight:normal;text-align:center;">12345</div>
<div class="a" style="left:2274px;top:641px;width:30px;height:30px;background:#e7effc;border-radius:50%"></div>
<svg style="left:2289px;top:656px" width="1" height="1" viewBox="0 0 1 1"><circle cx="0" cy="-4.5" r="3.6" fill="#fbfdff"/><ellipse cx="0" cy="5" rx="7.2" ry="3.6" fill="#fbfdff"/></svg>
<div class="t" style="left:2189px;width:200px;top:673px;font-size:11px;color:#555;font-weight:normal;text-align:center;">15:58</div>
<svg style="left:2134px;top:774px;" width="12" height="8" viewBox="0 0 12 8"><path d="M1 1 L6 6 L11 1" fill="none" stroke="#555" stroke-width="1.5"/></svg>
<div class="t" style="left:2069px;width:200px;top:768px;font-size:17px;color:#555;font-weight:normal;text-align:center;">#</div>
<div class="a" style="left:2186px;top:761px;width:78px;height:38px;background:#e7f0fc;border-radius:19px 0 19px 19px"></div>
<div class="t" style="left:2125px;width:200px;top:770px;font-size:14px;color:#222;font-weight:normal;text-align:center;">12345</div>
<div class="a" style="left:2274px;top:756px;width:30px;height:30px;background:#e7effc;border-radius:50%"></div>
<svg style="left:2289px;top:771px" width="1" height="1" viewBox="0 0 1 1"><circle cx="0" cy="-4.5" r="3.6" fill="#fbfdff"/><ellipse cx="0" cy="5" rx="7.2" ry="3.6" fill="#fbfdff"/></svg>
<div class="t" style="left:2189px;width:200px;top:788px;font-size:11px;color:#555;font-weight:normal;text-align:center;">15:59</div>
<svg style="left:18px;top:65px;" width="14" height="14" viewBox="0 0 14 14"><path d="M1 6.6 L7 1 L13 6.6 M2.8 5 V12.4 H11.2 V5 M5.6 12.4 V8.6 H8.4 V12.4 M10.5 2 V3.8" stroke="#fff" fill="none" stroke-width="1.2" stroke-linecap="round" stroke-linejoin="round"/></svg>
<svg style="left:18px;top:113px;" width="14" height="14" viewBox="0 0 14 14"><path d="M7 1 L13 4.2 L7 7.4 L1 4.2 Z M1 7 L7 10.2 L13 7 M1 9.8 L7 13 L13 9.8" stroke="#fff" fill="none" stroke-width="1.2" stroke-linecap="round" stroke-linejoin="round"/></svg>
<svg style="left:18px;top:161px;" width="14" height="14" viewBox="0 0 14 14"><path d="M4.5 1.2 C3.2 1.2 2.6 2 2.6 3 V8.4 C2.6 10 3.4 11 4.6 12 L6 12.8 C7 13.2 8.2 13 8.8 12.2 C9.4 11.3 9 10.4 8 9.8 L6.6 9 V3 C6.6 2 6 1.2 4.5 1.2 Z M6.6 4 H4.2" stroke="#fff" fill="none" stroke-width="1.2" stroke-linecap="round" stroke-linejoin="round"/></svg>
<svg style="left:18px;top:209px;" width="14" height="14" viewBox="0 0 14 14"><path d="M1.5 12.2 H12.5 M2 12 L6 5 M3.5 7.8 L9 12 M5 10.8 L11.8 2.5" stroke="#fff" fill="none" stroke-width="1.2" stroke-linecap="round" stroke-linejoin="round"/></svg>
<svg style="left:18px;top:257px;" width="14" height="14" viewBox="0 0 14 14"><path d="M1.2 1.5 H12.8 V10.2 H8.4 L7 12.4 L5.6 10.2 H1.2 Z M4.4 4.8 V7.2 M7 3.8 V8.2 M9.6 4.8 V7.2" stroke="#fff" fill="none" stroke-width="1.2" stroke-linecap="round" stroke-linejoin="round"/></svg>
<svg style="left:18px;top:305px;" width="14" height="14" viewBox="0 0 14 14"><path d="M2.5 1 V13 M7 1 V13 M11.5 1 V13" stroke="#fff" fill="none" stroke-width="1.2" stroke-linecap="round" stroke-linejoin="round"/><circle cx="2.5" cy="4" r="1.5" fill="#5567a6" stroke="#fff" stroke-width="1.1"/><circle cx="7" cy="9.5" r="1.5" fill="#5567a6" stroke="#fff" stroke-width="1.1"/><circle cx="11.5" cy="4" r="1.5" fill="#5567a6" stroke="#fff" stroke-width="1.1"/></svg>
<svg style="left:18px;top:353px;" width="14" height="14" viewBox="0 0 14 14"><path d="M7 3.2 L3 10.6 M7 3.2 L11 10.6 M3.6 11.6 H10.4" stroke="#fff" fill="none" stroke-width="1.2" stroke-linecap="round" stroke-linejoin="round"/><circle cx="7" cy="2.4" r="1.6" stroke="#fff" fill="none" stroke-width="1.2" stroke-linecap="round" stroke-linejoin="round"/><circle cx="2.4" cy="11.4" r="1.6" stroke="#fff" fill="none" stroke-width="1.2" stroke-linecap="round" stroke-linejoin="round"/><circle cx="11.6" cy="11.4" r="1.6" stroke="#fff" fill="none" stroke-width="1.2" stroke-linecap="round" stroke-linejoin="round"/></svg>
<svg style="left:18px;top:401px;" width="14" height="14" viewBox="0 0 14 14"><path d="M7 3.4 C5 3.4 3.8 4.8 3.8 6.6 C3.8 8 4.8 8.8 5.2 9.8 V11 H8.8 V9.8 C9.2 8.8 10.2 8 10.2 6.6 C10.2 4.8 9 3.4 7 3.4 Z M5.6 12.6 H8.4 M7 0.6 V1.6 M1.6 6.6 H2.4 M11.6 6.6 H12.4 M2.8 2.6 L3.4 3.2 M11.2 2.6 L10.6 3.2" stroke="#fff" fill="none" stroke-width="1.2" stroke-linecap="round" stroke-linejoin="round"/></svg>
<svg style="left:18px;top:449px;" width="14" height="14" viewBox="0 0 14 14"><path d="M3.6 9.6 C1.8 9.6 1 8.4 1 7.2 C1 5.8 2 4.8 3.4 4.8 C3.8 2.6 5.2 1.4 7.2 1.4 C9.4 1.4 10.8 3 11 4.8 C12.4 5 13 6 13 7.2 C13 8.6 12 9.6 10.4 9.6 M5 8 H9 M5.4 10.2 H8.6 M5.8 12.4 H8.2" stroke="#fff" fill="none" stroke-width="1.2" stroke-linecap="round" stroke-linejoin="round"/></svg>
<svg style="left:18px;top:497px;" width="14" height="14" viewBox="0 0 14 14"><path d="M7 1 L8.6 2.2 L10.6 2 L11.2 4 L12.8 5.2 L12 7 L12.8 8.8 L11.2 10 L10.6 12 L8.6 11.8 L7 13 L5.4 11.8 L3.4 12 L2.8 10 L1.2 8.8 L2 7 L1.2 5.2 L2.8 4 L3.4 2 L5.4 2.2 Z M4.8 9.6 C5 8.4 6 8 7 8 C8 8 9 8.4 9.2 9.6" stroke="#fff" fill="none" stroke-width="1.2" stroke-linecap="round" stroke-linejoin="round"/><circle cx="7" cy="5.8" r="1.5" stroke="#fff" fill="none" stroke-width="1.2" stroke-linecap="round" stroke-linejoin="round"/></svg>
<svg style="left:18px;top:545px;" width="14" height="14" viewBox="0 0 14 14"><path d="M7 1 L8.6 2.2 L10.6 2 L11.2 4 L12.8 5.2 L12 7 L12.8 8.8 L11.2 10 L10.6 12 L8.6 11.8 L7 13 L5.4 11.8 L3.4 12 L2.8 10 L1.2 8.8 L2 7 L1.2 5.2 L2.8 4 L3.4 2 L5.4 2.2 Z M4.6 7 L6.3 8.7 L9.6 5.4" stroke="#fff" fill="none" stroke-width="1.2" stroke-linecap="round" stroke-linejoin="round"/></svg>
<svg style="left:18px;top:593px;" width="14" height="14" viewBox="0 0 14 14"><path d="M3 4 C4.5 2.8 9.5 2.8 11 4 C12.4 5 12.4 9 11 10 C9.5 11.2 4.5 11.2 3 10 C1.6 9 1.6 5 3 4 Z M0.6 5.5 H2.4 M0.6 8.5 H2.4 M11.6 5.5 H13.4 M11.6 8.5 H13.4" stroke="#fff" fill="none" stroke-width="1.2" stroke-linecap="round" stroke-linejoin="round"/><path d="M4 5.2 H10 V8.8 H4 Z" fill="#fff" stroke="none"/></svg>
<svg style="left:18px;top:641px;" width="14" height="14" viewBox="0 0 14 14"><path d="M7 1.2 V11.4 M2 3.2 H12 M4.2 12.8 H9.8 M5.2 11.4 H8.8 M2 3.2 L0.8 7.6 C0.8 8.6 3.2 8.6 3.2 7.6 Z M12 3.2 L10.8 7.6 C10.8 8.6 13.2 8.6 13.2 7.6 Z" stroke="#fff" fill="none" stroke-width="1.2" stroke-linecap="round" stroke-linejoin="round"/></svg>
<svg style="left:18px;top:689px;" width="14" height="14" viewBox="0 0 14 14"><circle cx="7" cy="7" r="6" stroke="#fff" fill="none" stroke-width="1.2" stroke-linecap="round" stroke-linejoin="round"/><circle cx="7" cy="7" r="3" stroke="#fff" fill="none" stroke-width="1.2" stroke-linecap="round" stroke-linejoin="round"/><path d="M3 3 L4.9 4.9 M11 3 L9.1 4.9 M3 11 L4.9 9.1 M11 11 L9.1 9.1" stroke="#fff" fill="none" stroke-width="1.2" stroke-linecap="round" stroke-linejoin="round"/></svg>
<svg style="left:257px;top:112px;" width="16" height="16" viewBox="0 0 16 16"><path d="M1.3 1.4 H14.6 V11.2 H1.3 Z M8 11.2 V14.4 M4.6 14.4 H11.4 M3.6 8.4 L6.2 5.4 L8.2 7.2 L11.6 3.8" stroke="#6b7ccb" fill="none" stroke-width="1.3" stroke-linecap="round" stroke-linejoin="round"/></svg>
<svg style="left:257px;top:159px;" width="17" height="17" viewBox="0 0 17 17"><path d="M7 3 A6.2 6.2 0 1 0 13.2 9.2 H7 Z" stroke="#6b7ccb" fill="none" stroke-width="1.3" stroke-linecap="round" stroke-linejoin="round"/><path d="M9.4 0.8 A6 6 0 0 1 15.4 6.8 H9.4 Z" stroke="#6b7ccb" fill="none" stroke-width="1.3" stroke-linecap="round" stroke-linejoin="round"/></svg>
<svg style="left:256px;top:207px;" width="17" height="17" viewBox="0 0 17 17"><path d="M1.4 10.6 V15.6 H15.6 V10.6 M8.5 1.6 V11.4 M4.6 7.6 L8.5 11.4 L12.4 7.6" stroke="#6b7ccb" fill="none" stroke-width="1.3" stroke-linecap="round" stroke-linejoin="round"/></svg>
<svg style="left:504px;top:123px;" width="24" height="23" viewBox="0 0 24 23"><path d="M1.6 1.8 H22.2 V16.8 H1.6 Z M12 16.8 V21 M6.6 21.2 H17.4 M5.2 12.4 L9.6 7.4 L12.6 10.2 L18.2 4.8" stroke="#6173c4" fill="none" stroke-width="1.8" stroke-linejoin="round"/></svg>
<svg style="left:0px;top:1028px;" width="12" height="22" viewBox="0 0 12 22"><path d="M0 0 C0.5 10 3 17 8 22 L0 22 Z" fill="#2b2b2b"/></svg>
<div class="a" style="left:0px;top:50px;width:1px;height:1000px;background:#6b7cbc"></div>
</body></html>
